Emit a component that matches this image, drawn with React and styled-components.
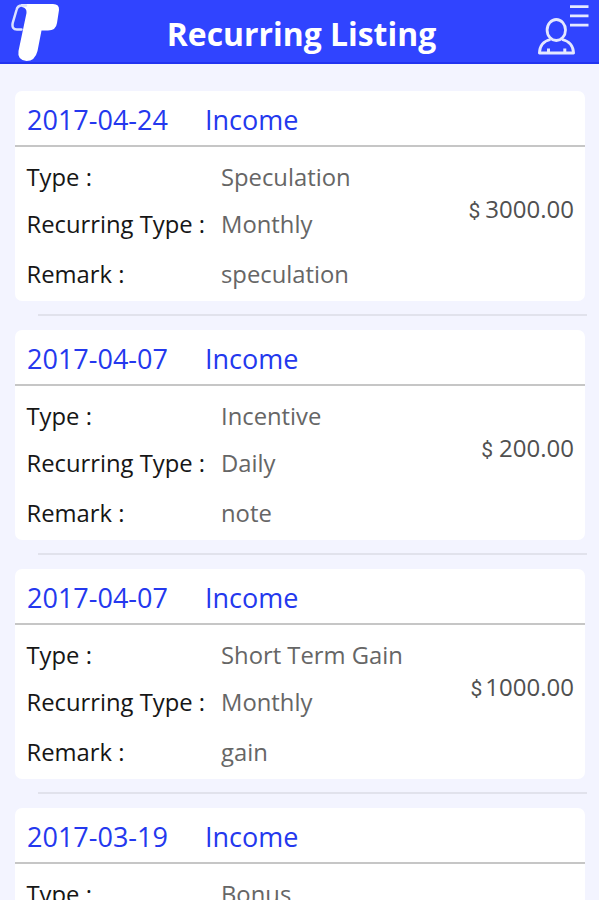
import React from 'react'
import styled, { createGlobalStyle } from 'styled-components'

const GlobalStyle = createGlobalStyle`
  * {
    box-sizing: border-box;
  }

  body {
    margin: 0;
    background-color: #f3f4ff;
    font-family: 'Open Sans', 'Noto Sans', sans-serif;
  }
`

const Screen = styled.div`
  height: 100vh;
  overflow: hidden;
  display: flex;
  flex-direction: column;
  background-color: #f3f4ff;
`

const Header = styled.header`
  height: 64px;
  flex-shrink: 0;
  display: flex;
  justify-content: space-between;
  padding: 3px 9px 0 11px;
  background-color: #3044ff;
  border-bottom: 2px solid #2234f0;
`

const Title = styled.h1`
  margin: 0;
  padding: 9px 0 0 4px;
  color: #ffffff;
  font-size: 31.9px;
  line-height: 44px;
  font-weight: 700;
`

const List = styled.main`
  padding: 27px 14px 0 15px;
`

const Card = styled.section`
  height: 210px;
  background-color: #ffffff;
  border-radius: 7px;
`

const CardHeader = styled.div`
  height: 56px;
  display: grid;
  grid-template-columns: 178px 1fr;
  padding: 9px 12px 0;
  border-bottom: 2px solid #c6c6c6;
  color: #2438ee;
  font-size: 27px;
  line-height: 40px;
`

const CardBody = styled.div`
  display: flex;
  justify-content: space-between;
  padding: 6px 11px 0 11.5px;
`

const Details = styled.div`
  display: grid;
  grid-template-columns: 194.5px auto;
  grid-template-rows: 47px 50px 47px;
  font-size: 23.8px;
  line-height: 48px;
  white-space: nowrap;
`

const Label = styled.span`
  color: #161616;
`

const Value = styled.span`
  color: #666666;
`

const Amount = styled.div`
  padding-top: 32px;
  color: #505050;
  font-size: 24px;
  line-height: 48px;
`

const Currency = styled.span`
  margin-right: ${props => props.$gap}px;
  font-family: Roboto, sans-serif;
  font-size: 21px;
`

const Divider = styled.hr`
  height: 2px;
  margin: 13px -2px 14px 23px;
  border: 0;
  background-color: #e1e2ec;
`

const Logo = () => (
  <svg width='50' height='59' viewBox='0 0 50 59' fill='none'>
    <path
      d='M10 1H42Q48.5 1 48 7L46 20Q45 27.5 37 27.5H30.5L26.5 48Q24 58 15.5 58Q6 57 7.5 48L15.5 10Q16 5 11 4Z'
      fill='#ffffff'
    />
    <path
      d='M15 2.5H11Q6.5 2.5 5.5 7L1.7 20Q0.5 26.5 6 26.5H10.5'
      stroke='#dce1ff'
      strokeWidth='2.5'
      strokeLinecap='round'
    />
  </svg>
)

const UserMenuIcon = () => (
  <svg width='52' height='54' viewBox='0 0 52 54' fill='none' stroke='#e4e8ff'>
    <ellipse cx='18.3' cy='27' rx='9.2' ry='10.5' strokeWidth='2.8' />
    <path
      d='M12.5 36.5Q1.8 39 1.4 50H35.6Q35 39 24 36.5'
      strokeWidth='2.8'
      strokeLinejoin='round'
    />
    <path d='M10.5 45.5V50M26.8 45.5V50' strokeWidth='3' />
    <path d='M32 3.7H50.5M32 12.9H50.5M32 22.2H50.5' strokeWidth='2.8' />
  </svg>
)

const entries = [
  { id: 1, date: '2017-04-24', kind: 'Income', type: 'Speculation', recurring: 'Monthly', remark: 'speculation', amount: '3000.00', gap: 5 },
  { id: 2, date: '2017-04-07', kind: 'Income', type: 'Incentive', recurring: 'Daily', remark: 'note', amount: '200.00', gap: 6 },
  { id: 3, date: '2017-04-07', kind: 'Income', type: 'Short Term Gain', recurring: 'Monthly', remark: 'gain', amount: '1000.00', gap: 3 },
  { id: 4, date: '2017-03-19', kind: 'Income', type: 'Bonus' }
]

const Entry = ({ entry }) => (
  <Card>
    <CardHeader>
      <span>{entry.date}</span>
      <span>{entry.kind}</span>
    </CardHeader>
    <CardBody>
      <Details>
        <Label>Type :</Label>
        <Value>{entry.type}</Value>
        {entry.recurring ? (
          <>
            <Label>Recurring Type :</Label>
            <Value>{entry.recurring}</Value>
          </>
        ) : null}
        {entry.remark ? (
          <>
            <Label>Remark :</Label>
            <Value>{entry.remark}</Value>
          </>
        ) : null}
      </Details>
      {entry.amount ? (
        <Amount>
          <Currency $gap={entry.gap}>$</Currency>
          {entry.amount}
        </Amount>
      ) : null}
    </CardBody>
  </Card>
)

export default function App () {
  return (
    <Screen>
      <GlobalStyle />
      <Header>
        <Logo />
        <Title>Recurring Listing</Title>
        <UserMenuIcon />
      </Header>
      <List>
        {entries.map((entry, index) => (
          <React.Fragment key={entry.id}>
            {index > 0 ? <Divider /> : null}
            <Entry entry={entry} />
          </React.Fragment>
        ))}
      </List>
    </Screen>
  )
}
